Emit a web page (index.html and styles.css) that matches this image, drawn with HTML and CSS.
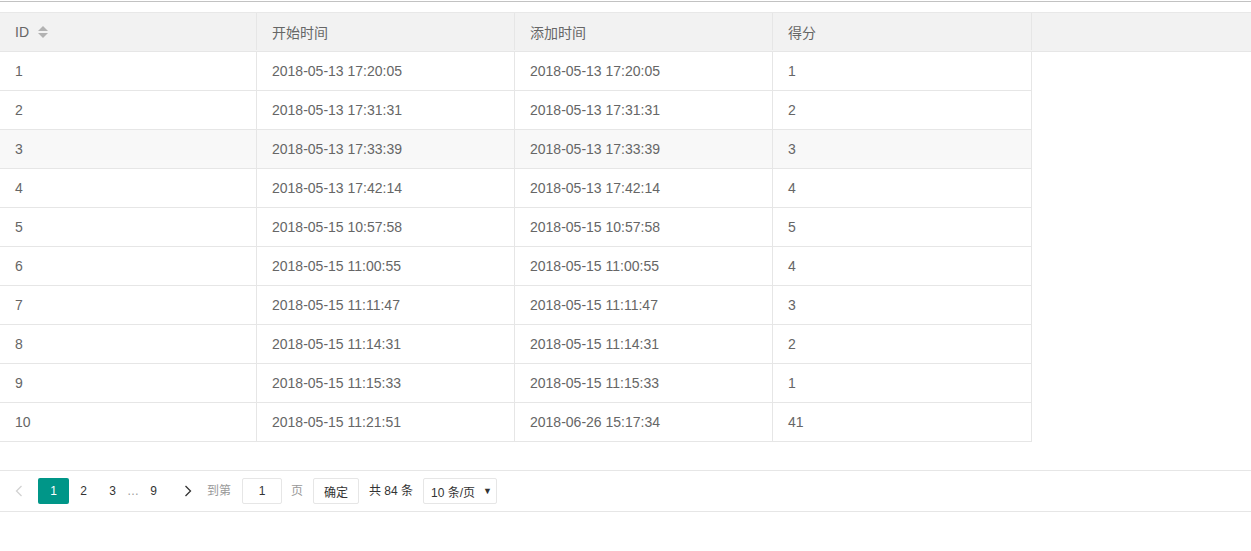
FILE: index.html
```html
<!DOCTYPE html>
<html>
<head>
<meta charset="utf-8">
<link rel="stylesheet" href="styles.css">
</head>
<body>
<div class="rule"></div>
<div class="table-box">
  <div class="thead">
    <div class="row">
      <div class="cell c1">ID <span class="sort"><i class="up"></i><i class="down"></i></span></div>
      <div class="cell c2">开始时间</div>
      <div class="cell c3">添加时间</div>
      <div class="cell c4">得分</div>
      <div class="cell fill"></div>
    </div>
  </div>
  <div class="tbody">
    <div class="row"><div class="cell c1">1</div><div class="cell c2">2018-05-13 17:20:05</div><div class="cell c3">2018-05-13 17:20:05</div><div class="cell c4">1</div></div>
    <div class="row"><div class="cell c1">2</div><div class="cell c2">2018-05-13 17:31:31</div><div class="cell c3">2018-05-13 17:31:31</div><div class="cell c4">2</div></div>
    <div class="row hover"><div class="cell c1">3</div><div class="cell c2">2018-05-13 17:33:39</div><div class="cell c3">2018-05-13 17:33:39</div><div class="cell c4">3</div></div>
    <div class="row"><div class="cell c1">4</div><div class="cell c2">2018-05-13 17:42:14</div><div class="cell c3">2018-05-13 17:42:14</div><div class="cell c4">4</div></div>
    <div class="row"><div class="cell c1">5</div><div class="cell c2">2018-05-15 10:57:58</div><div class="cell c3">2018-05-15 10:57:58</div><div class="cell c4">5</div></div>
    <div class="row"><div class="cell c1">6</div><div class="cell c2">2018-05-15 11:00:55</div><div class="cell c3">2018-05-15 11:00:55</div><div class="cell c4">4</div></div>
    <div class="row"><div class="cell c1">7</div><div class="cell c2">2018-05-15 11:11:47</div><div class="cell c3">2018-05-15 11:11:47</div><div class="cell c4">3</div></div>
    <div class="row"><div class="cell c1">8</div><div class="cell c2">2018-05-15 11:14:31</div><div class="cell c3">2018-05-15 11:14:31</div><div class="cell c4">2</div></div>
    <div class="row"><div class="cell c1">9</div><div class="cell c2">2018-05-15 11:15:33</div><div class="cell c3">2018-05-15 11:15:33</div><div class="cell c4">1</div></div>
    <div class="row"><div class="cell c1">10</div><div class="cell c2">2018-05-15 11:21:51</div><div class="cell c3">2018-06-26 15:17:34</div><div class="cell c4">41</div></div>
  </div>
  <div class="page">
    <span class="pg prev"><svg width="8" height="12" viewBox="0 0 8 12"><path d="M6.5 1 L1.5 6 L6.5 11" fill="none" stroke="#d2d2d2" stroke-width="1.3"/></svg></span>
    <span class="pg curr">1</span>
    <span class="pg num">2</span>
    <span class="pg num">3</span>
    <span class="pg spr">…</span>
    <span class="pg num">9</span>
    <span class="pg next"><svg width="8" height="12" viewBox="0 0 8 12"><path d="M1.5 1 L6.5 6 L1.5 11" fill="none" stroke="#333" stroke-width="1.3"/></svg></span>
    <span class="skip">到第</span>
    <span class="input">1</span>
    <span class="skip ye">页</span>
    <span class="btn">确定</span>
    <span class="count">共 84 条</span>
    <span class="limit">10 条/页 <span class="caret">▼</span></span>
  </div>
</div>
</body>
</html>
```
FILE: styles.css
```css
* { box-sizing: border-box; }
body {
  margin: 0;
  background: #fff;
  font-family: "Liberation Sans", Arial, "Noto Sans CJK SC", sans-serif;
  color: #666;
  font-size: 14px;
}
.rule {
  margin-top: 1px;
  height: 1px;
  background: #c2c2c2;
}
.table-box {
  margin-top: 10px;
}
.thead {
  background: #f2f2f2;
  border-top: 1px solid #e8e8e8;
  border-bottom: 1px solid #e6e6e6;
}
.row {
  display: flex;
  height: 39px;
  border-bottom: 1px solid #e6e6e6;
}
.thead .row { border-bottom: none; height: 38px; padding-bottom: 1px; }
.tbody { width: 1032px; }
.row.hover { background: #f8f8f8; }
.cell {
  display: flex;
  align-items: center;
  padding: 0 15px;
  border-right: 1px solid #e6e6e6;
  white-space: nowrap;
}
.c1 { width: 257px; }
.c2 { width: 258px; }
.c3 { width: 258px; }
.c4 { width: 259px; }
.fill { flex: 1; border-right: none; }
.sort {
  display: inline-flex;
  flex-direction: column;
  margin-left: 9px;
  gap: 2px;
  margin-top: 1px;
}
.sort i {
  display: block;
  width: 0; height: 0;
  border-left: 5px solid transparent;
  border-right: 5px solid transparent;
}
.sort .up { border-bottom: 5px solid #b2b2b2; }
.sort .down { border-top: 5px solid #b2b2b2; }
.page {
  margin-top: 28px;
  border-top: 1px solid #e6e6e6;
  border-bottom: 1px solid #e6e6e6;
  height: 42px;
  padding-top: 7px;
  display: flex;
  align-items: flex-start;
  font-size: 12px;
  color: #333;
}
.pg {
  height: 26px;
  display: inline-flex;
  align-items: center;
  justify-content: center;
}
.prev { width: 24px; margin-left: 7px; margin-right: 7px; }
.curr { width: 31px; background: #009688; color: #fff; border-radius: 2px; }
.num { width: 29px; }
.spr { width: 12px; color: #999; }
.next { width: 26px; margin-left: 7px; }
.skip {
  height: 26px;
  line-height: 26px;
  color: #999;
  margin-left: 6px;
}
.input {
  margin-left: 11px;
  width: 40px;
  height: 26px;
  border: 1px solid #e6e6e6;
  display: inline-flex;
  align-items: center;
  justify-content: center;
  border-radius: 2px;
}
.ye { margin-left: 9px; }
.btn {
  margin-left: 10px;
  width: 46px;
  height: 26px;
  border: 1px solid #e6e6e6;
  display: inline-flex;
  align-items: center;
  justify-content: center;
  border-radius: 2px;
}
.count {
  margin-left: 10px;
  height: 26px;
  line-height: 26px;
}
.limit {
  margin-left: 10px;
  width: 74px;
  height: 26px;
  border: 1px solid #e6e6e6;
  display: inline-flex;
  align-items: center;
  padding-left: 7px;
  border-radius: 2px;
}
.caret { font-size: 9px; margin-left: 8px; }
```
